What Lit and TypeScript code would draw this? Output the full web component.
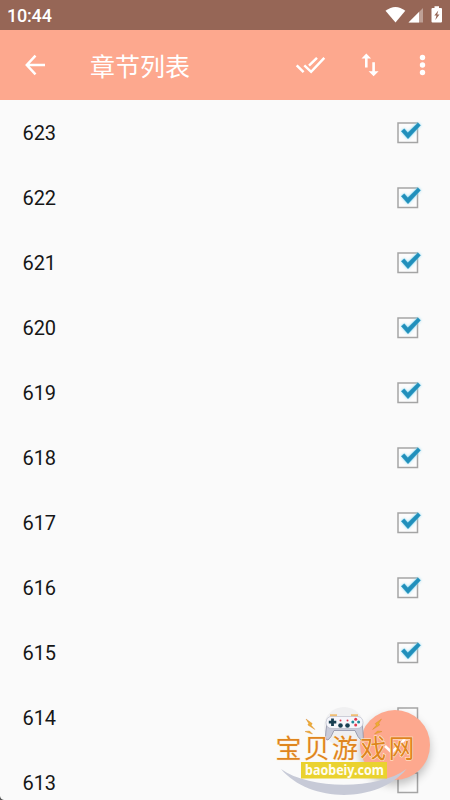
import { LitElement, html, svg, css } from "lit";
import { customElement, property } from "lit/decorators.js";

@customElement("status-bar")
class StatusBar extends LitElement {
  static styles = css`
    :host { display: flex; align-items: center; height: 30px; background: #966656; color: #fff; padding: 0 8px 0 7px; box-sizing: border-box; }
    .time { font: 500 18px/30px Roboto, sans-serif; flex: 1; padding-top: 2px; letter-spacing: -0.2px; }
    svg { display: block; margin-right: -8px; }
  `;
  render() {
    return html`<span class="time">10:44</span>
      <svg width="70" height="30" viewBox="380 0 70 30" fill="#fff">
        <path d="M385.5 10.800Q395.500 3.200 405.300 10.800L395.500 22.500Z" />
        <path d="M423 8V22.500H408.500Z" opacity=".38" />
        <path d="M419 12V22.500H408.500Z" />
        <path fill-rule="evenodd" d="M434.500 6.300h4.500v1.600h2q1 0 1 1V21.600q0 1-1 1h-8.500q-1 0-1-1V8.900q0-1 1-1h2ZM438.300 10.500l-4 5h2.200l-1.200 4.500 4.200-5.600h-2.300Z" />
      </svg>`;
  }
}

@customElement("app-toolbar")
class AppToolbar extends LitElement {
  static styles = css`
    :host { display: grid; grid-template-columns: 90px 1fr 60px 60px 54px; align-items: center; height: 70px; background: #fda88e; color: #fff; }
    .title { font: 400 25px/36px "Noto Sans CJK SC", sans-serif; padding-bottom: 1px; }
    svg { display: block; fill: none; stroke: #fff; stroke-width: 2.5; }
    .back { margin-left: 20px; }
    .dots { fill: #fff; stroke: none; margin-left: 12px; }
    .arrows { fill: #fff; stroke: none; margin-left: 22px; }
    .all { margin-left: 19px; }
  `;
  render() {
    return html`
      <svg class="back" width="30" height="30" viewBox="0 0 30 30"><path d="M25 15H7.500M15.500 5.700L6.800 15l8.700 9.300" /></svg>
      <span class="title">章节列表</span>
      <svg class="all" width="32" height="30" viewBox="0 0 32 30"><path d="M1.700 15.300l6.900 6.900M9.300 15.300l6.800 6.500L29.300 7.800M14 15.700L22 7.800" /></svg>
      <svg class="arrows" width="30" height="30" viewBox="0 0 30 30"><path d="M8.300 3.600l4.800 5H9.600v9H7v-9H3.500ZM15.600 26.200l-5-5h3.700v-9h2.600v9h3.700Z" /></svg>
      <svg class="dots" width="30" height="30" viewBox="0 0 30 30"><circle cx="14.500" cy="7.500" r="2.700" /><circle cx="14.500" cy="15" r="2.700" /><circle cx="14.500" cy="22.500" r="2.700" /></svg>`;
  }
}

@customElement("chapter-row")
class ChapterRow extends LitElement {
  @property() label = "";
  @property({ type: Boolean }) checked = false;
  static styles = css`
    :host { display: flex; align-items: center; justify-content: space-between; height: 65px; padding: 0 26px 0 22.500px; box-sizing: border-box; color: #161616; flex: none; }
    .label { font: 400 20px/30px Roboto, sans-serif; letter-spacing: -0.1px; }
    svg { display: block; overflow: visible; }
    .mark { filter: drop-shadow(0 0 1.500px #8fdcf4); }
  `;
  render() {
    return html`<span class="label">${this.label}</span>
      <svg width="27" height="22" viewBox="0 0 27 22">
        <rect x="1" y="1" width="19.500" height="19.500" fill="#fcfcfc" stroke="#a5a5a5" stroke-width="1.500" />
        ${this.checked
          ? svg`<path class="mark" d="M4.300 9.200L7.300 6.800l3.500 4L21 .8l2.500 2.500L11 16.700Z" fill="#218fbb" stroke="#299cc6" stroke-width=".5" />`
          : null}
      </svg>`;
  }
}

@customElement("site-badge")
class SiteBadge extends LitElement {
  static styles = css`
    :host { display: block; }
    svg { display: block; }
    .name { font: 400 26px "Noto Sans CJK SC", sans-serif; fill: #df851e; stroke: #fff0d4; stroke-width: 1px; paint-order: stroke; }
    .url { font: 700 15px "Noto Sans", sans-serif; fill: #fffdf0; }
  `;
  render() {
    return html`<svg width="160" height="105" viewBox="265 695 160 105">
      <circle cx="344" cy="727" r="20" fill="#ececee" opacity=".75" />
      <path d="M281 769C310 803.500 378 803.500 406.500 769C378 790 310 790 281 769Z" fill="#c7cad7" />
      <path d="M329 719Q326 724 325.500 737Q325.500 740.500 328 740Q331 738 334 730.500H355Q358 738 361 740Q363.800 740.500 363.300 737Q363 724 360 719Z" fill="#c9cbd9" stroke="#8e91a5" stroke-width=".8" />
      <path d="M330 715.300h7M351 715.300h7" stroke="#efbd72" stroke-width="2" />
      <path d="M330 716.500h28q5 1 5 6q0 5.500-6 6H332q-6-.5-6-6q0-5 4-6Z" fill="#f6f6fb" stroke="#a7aabb" stroke-width=".5" />
      <path d="M332.500 718.500v7.500M328.800 722.200h7.500" stroke="#193f52" stroke-width="2.800" />
      <g fill="#193f52"><circle cx="340.500" cy="725.500" r="2.300" /><circle cx="347.500" cy="725.500" r="2.300" /></g>
      <g fill="#e2394e"><circle cx="355.700" cy="719.300" r="1.500" /><circle cx="355.700" cy="725" r="1.500" /><circle cx="340.500" cy="720.500" r="1" /><circle cx="347.500" cy="720.500" r="1" /></g>
      <g fill="#208999"><circle cx="352.800" cy="722" r="1.500" /><circle cx="358.600" cy="722" r="1.500" /></g>
      <g fill="#edae35" stroke="#d68327" stroke-width=".4"><path d="M306 719l6.200 4.500-1 1.800 3.700 4.200-7-4.500.8-1.700ZM305 731.500l4.500-.5 3 3-4-1.200Z" /><path d="M381.500 719l-6.200 4.500 1 1.800-3.700 4.200 7-4.500-.8-1.700ZM382 731.500l-4.500-.5-3 3 4-1.200Z" /></g>
      <text class="name" x="275.500" y="758" textLength="139" lengthAdjust="spacing">宝贝游戏网</text>
      <rect x="301" y="762" width="86" height="16.500" fill="#ead22f" />
      <text class="url" x="305" y="774.500" textLength="79" lengthAdjust="spacingAndGlyphs">baobeiy.com</text>
    </svg>`;
  }
}

@customElement("app-root")
class AppRoot extends LitElement {
  static styles = css`
    :host { display: flex; flex-direction: column; position: relative; width: 450px; height: 800px; overflow: hidden; background: #fafafa; }
    .list { flex: 1; min-height: 0; overflow: hidden; display: flex; flex-direction: column; }
    .fab { position: absolute; right: 20px; bottom: 20px; width: 70px; height: 70px; border-radius: 50%; background: #fda88e; box-shadow: 0 5px 10px rgba(0,0,0,.24); display: grid; place-items: center; }
    .fab svg { fill: none; stroke: #fff; stroke-width: 2.600; }
    .badge { position: absolute; left: 265px; top: 695px; }
    .corner { position: absolute; left: 0; bottom: 0; }
  `;
  render() {
    const rows = Array.from({ length: 11 }, (_, i) => 623 - i);
    return html`<status-bar></status-bar><app-toolbar></app-toolbar>
      <div class="list">${rows.map((n) => html`<chapter-row .label=${String(n)} .checked=${n > 614}></chapter-row>`)}</div>
      <div class="fab"><svg width="30" height="30" viewBox="0 0 30 30"><path d="M5 16l6.800 6.500L25 9" /></svg></div>
      <site-badge class="badge"></site-badge>
      <svg class="corner" width="4" height="4" viewBox="0 0 4 4"><path d="M0 0Q.5 3.500 4 4H0Z" fill="#555" /></svg>`;
  }
}
